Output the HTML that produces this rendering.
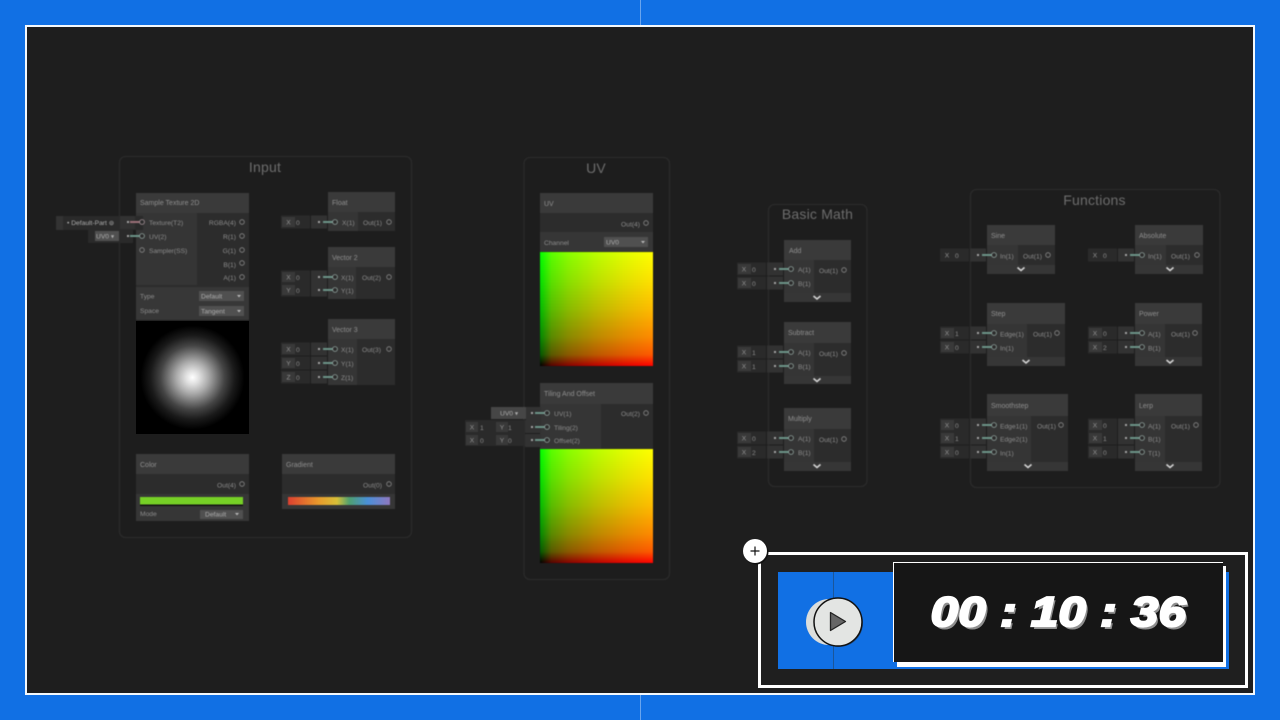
<!DOCTYPE html>
<html lang="en">
<head>
<meta charset="utf-8">
<title>Shader Graph Nodes</title>
<style>
html,body{margin:0;padding:0;width:1280px;height:720px;overflow:hidden;background:#1170e4}
*{box-sizing:border-box}
.a{position:absolute}
#frame{left:25px;top:25px;width:1230px;height:670px;background:#1e1e1e;border:2px solid #f4f8fb}
svg{position:absolute;left:0;top:0}
#g{filter:blur(.6px)}
#g text{font-family:"Liberation Sans",sans-serif;font-size:6.7px;fill:#8c8c8c}
#g text.h{font-size:7px;fill:#8f8f8f}
#g text.t{font-size:14px;fill:#6d6d6d;text-anchor:middle;letter-spacing:.2px}
#g text.k{text-anchor:middle;fill:#949494}
#g text.e{text-anchor:end}
#g text.w{fill:#adadad}
.uvp{background:linear-gradient(to right,#000 0,#590000 10%,#880000 25%,#bb0000 50%,#e10000 75%,#f00 100%),linear-gradient(to top,#000 0,#005900 10%,#008800 25%,#00bb00 50%,#00e100 75%,#0f0 100%);background-blend-mode:screen;filter:blur(.5px)}
#time{left:893px;top:562px;width:331px;height:100px;line-height:100px;text-align:center;font-family:"Liberation Sans",sans-serif;font-weight:700;font-style:italic;font-size:42px;color:#fff;-webkit-text-stroke:2.2px #fff;text-shadow:2px 3px 0 #8f8f8f;letter-spacing:.3px;white-space:pre;transform:scaleX(1.17)}
</style>
</head>
<body>
<div class="a" style="left:640px;top:0;width:1px;height:720px;background:#6aa5ee"></div>
<div class="a" id="frame"></div>

<svg id="g" width="1280" height="720" viewBox="0 0 1280 720">
<defs>
<g id="r">
<rect x="-54" y="-6.5" width="29" height="13" fill="#2a2a2a"/>
<rect x="-53" y="-5" width="13" height="10" fill="#393939"/>
<rect x="-24" y="-6.5" width="16" height="13" fill="#323232"/>
<rect x="-17" y="-1" width="2" height="2" fill="#a5a5a5"/>
<use href="#l"/>
</g>
<g id="l">
<rect x="-12" y="-1" width="10" height="2" fill="#6c9488"/>
<circle r="2.4" fill="#2c2c2c" stroke="#93a5a0" stroke-width=".8"/>
</g>
<circle id="p" r="2.3" fill="none" stroke="#8a8a8a" stroke-width=".8"/>
<path id="v" d="M-3.5-1.5 0 1.500 3.500-1.500" fill="none" stroke="#d5d5d5" stroke-width="1.600"/>
<path id="d" d="M-2-1H2L0 1.400Z" fill="#bbb"/>
</defs>

<!-- groups -->
<g fill="#1d1d1d" stroke="#2b2b2b" stroke-width="1.300">
<rect x="119.500" y="156.500" width="292" height="381" rx="6"/>
<rect x="524" y="157.500" width="145.500" height="422" rx="6"/>
<rect x="768.500" y="204.500" width="98.500" height="282" rx="6"/>
<rect x="970.500" y="189.500" width="249.500" height="298" rx="6"/>
</g>
<text class="t" x="265" y="172">Input</text>
<text class="t" x="596" y="173">UV</text>
<text class="t" x="817.500" y="219">Basic Math</text>
<text class="t" x="1094.500" y="205">Functions</text>

<!-- Sample Texture 2D -->
<rect x="136" y="193" width="113" height="127" fill="#2c2c2c"/>
<rect x="136" y="193" width="113" height="20" fill="#3a3a3a"/>
<rect x="136" y="213" width="61" height="72" fill="#353535"/>
<rect x="136" y="287" width="113" height="33" fill="#373737"/>
<text class="h" x="140" y="205">Sample Texture 2D</text>
<rect x="56" y="216" width="87" height="14" fill="#2a2a2a"/>
<rect x="56" y="216" width="7" height="14" fill="#333"/>
<text class="w" x="67" y="225">• Default-Part ⊚</text>
<rect x="120" y="216" width="15" height="13" fill="#323232"/>
<rect x="127" y="221" width="2" height="2" fill="#a5a5a5"/>
<rect x="130" y="221" width="10" height="2" fill="#9c7078"/>
<circle cx="142" cy="222" r="2.400" fill="#2c2c2c" stroke="#a8959a" stroke-width=".8"/>
<rect x="88" y="230" width="45" height="13" fill="#2a2a2a"/>
<rect x="95" y="231" width="24" height="10" fill="#505050"/>
<text class="w" x="96" y="238.500">UV0 ▾</text>
<use href="#l" x="142" y="236"/>
<rect x="127" y="235" width="2" height="2" fill="#a5a5a5"/>
<use href="#p" x="142" y="250"/>
<text x="149" y="225">Texture(T2)</text>
<text x="149" y="239">UV(2)</text>
<text x="149" y="253">Sampler(SS)</text>
<text class="e" x="236" y="225">RGBA(4)</text>
<text class="e" x="236" y="239">R(1)</text>
<text class="e" x="236" y="253">G(1)</text>
<text class="e" x="236" y="267">B(1)</text>
<text class="e" x="236" y="280">A(1)</text>
<use href="#p" x="242" y="222"/><use href="#p" x="242" y="236"/><use href="#p" x="242" y="250"/><use href="#p" x="242" y="263"/><use href="#p" x="242" y="277"/>
<text x="140" y="298.500">Type</text>
<text x="140" y="313">Space</text>
<rect x="199" y="291" width="45" height="10" fill="#505050"/>
<rect x="199" y="306" width="45" height="10" fill="#505050"/>
<text class="w" x="201" y="298.500">Default</text>
<text class="w" x="201" y="313.500">Tangent</text>
<use href="#d" x="239" y="296"/><use href="#d" x="239" y="311"/>

<!-- Float -->
<rect x="328" y="192" width="67" height="39" fill="#2c2c2c"/>
<rect x="328" y="192" width="67" height="20" fill="#3a3a3a"/>
<rect x="328" y="212" width="30" height="19" fill="#353535"/>
<text class="h" x="332" y="205">Float</text>
<use href="#r" x="335" y="222"/>
<text class="k" x="288.500" y="224.500">X</text><text x="296" y="225">0</text>
<text x="342" y="225">X(1)</text><text x="363" y="225">Out(1)</text><use href="#p" x="389" y="222"/>

<!-- Vector 2 -->
<rect x="328" y="247" width="67" height="52" fill="#2c2c2c"/>
<rect x="328" y="247" width="67" height="20" fill="#3a3a3a"/>
<rect x="328" y="267" width="28" height="32" fill="#353535"/>
<text class="h" x="332" y="260">Vector 2</text>
<use href="#r" x="335" y="277"/><use href="#r" x="335" y="290"/>
<text class="k" x="288.500" y="279.500">X</text><text x="296" y="280">0</text>
<text class="k" x="288.500" y="292.500">Y</text><text x="296" y="293">0</text>
<text x="341" y="280">X(1)</text><text x="341" y="293">Y(1)</text><text x="362" y="280">Out(2)</text><use href="#p" x="389" y="277"/>

<!-- Vector 3 -->
<rect x="328" y="319" width="67" height="66" fill="#2c2c2c"/>
<rect x="328" y="319" width="67" height="20" fill="#3a3a3a"/>
<rect x="328" y="339" width="29" height="46" fill="#353535"/>
<text class="h" x="332" y="332">Vector 3</text>
<use href="#r" x="335" y="349"/><use href="#r" x="335" y="363"/><use href="#r" x="335" y="377"/>
<text class="k" x="288.500" y="351.500">X</text><text x="296" y="352">0</text>
<text class="k" x="288.500" y="365.500">Y</text><text x="296" y="366">0</text>
<text class="k" x="288.500" y="379.500">Z</text><text x="296" y="380">0</text>
<text x="341" y="352">X(1)</text><text x="341" y="366">Y(1)</text><text x="341" y="380">Z(1)</text><text x="362" y="352">Out(3)</text><use href="#p" x="389" y="349"/>

<!-- Color -->
<rect x="136" y="454" width="113" height="67" fill="#2c2c2c"/>
<rect x="136" y="454" width="113" height="20" fill="#3a3a3a"/>
<rect x="136" y="494" width="113" height="27" fill="#363636"/>
<text class="h" x="140" y="467">Color</text>
<text class="e" x="236" y="487.500">Out(4)</text><use href="#p" x="242" y="484"/>
<rect x="140" y="497" width="103" height="9" fill="#111"/>
<rect x="140" y="497" width="103" height="7.500" fill="#76d026"/>
<text x="140" y="516">Mode</text>
<rect x="200" y="510" width="43" height="9" fill="#505050"/>
<text class="w" x="205" y="516.500">Default</text><use href="#d" x="237" y="514"/>

<!-- Gradient -->
<defs><linearGradient id="gr"><stop offset="0" stop-color="#dc4030"/><stop offset=".3" stop-color="#e89a2c"/><stop offset=".48" stop-color="#d8c038"/><stop offset=".6" stop-color="#4fa070"/><stop offset=".78" stop-color="#4a90d8"/><stop offset="1" stop-color="#8f78c0"/></linearGradient></defs>
<rect x="282" y="454" width="113" height="55" fill="#2c2c2c"/>
<rect x="282" y="454" width="113" height="20" fill="#3a3a3a"/>
<rect x="282" y="494" width="113" height="15" fill="#363636"/>
<text class="h" x="286" y="467">Gradient</text>
<text class="e" x="382" y="487.500">Out(0)</text><use href="#p" x="389" y="484"/>
<rect x="288" y="497" width="102" height="8" fill="url(#gr)"/>

<!-- UV -->
<rect x="540" y="193" width="113" height="59" fill="#2c2c2c"/>
<rect x="540" y="193" width="113" height="20" fill="#3a3a3a"/>
<rect x="540" y="232" width="113" height="20" fill="#363636"/>
<text class="h" x="544" y="206">UV</text>
<text class="e" x="640" y="226.500">Out(4)</text><use href="#p" x="646" y="223"/>
<text x="544" y="245">Channel</text>
<rect x="604" y="237" width="44" height="10" fill="#505050"/>
<text class="w" x="606" y="244.500">UV0</text><use href="#d" x="643" y="242"/>

<!-- Tiling and Offset -->
<rect x="540" y="383" width="113" height="66" fill="#2c2c2c"/>
<rect x="540" y="383" width="113" height="21" fill="#3a3a3a"/>
<rect x="540" y="404" width="61" height="45" fill="#353535"/>
<text class="h" x="544" y="396">Tiling And Offset</text>
<rect x="491" y="407" width="35" height="12" fill="#505050" fill-opacity=".8"/>
<text class="w" x="500" y="415.500">UV0 ▾</text>
<rect x="526" y="407" width="15" height="13" fill="#323232"/><rect x="531" y="412" width="2" height="2" fill="#a5a5a5"/>
<use href="#l" x="547" y="413"/>
<g fill="#2a2a2a"><rect x="465" y="420" width="60" height="13"/><rect x="465" y="433" width="60" height="13"/></g>
<g fill="#393939"><rect x="466" y="422" width="12" height="10"/><rect x="466" y="435" width="12" height="10"/><rect x="496" y="422" width="12" height="10"/><rect x="496" y="435" width="12" height="10"/></g>
<rect x="525" y="420" width="16" height="13" fill="#323232"/><rect x="525" y="434" width="16" height="13" fill="#323232"/>
<rect x="531" y="426" width="2" height="2" fill="#a5a5a5"/><rect x="531" y="439" width="2" height="2" fill="#a5a5a5"/>
<use href="#l" x="547" y="427"/><use href="#l" x="547" y="440"/>
<text class="k" x="472" y="429.500">X</text><text x="480" y="430">1</text><text class="k" x="502" y="429.500">Y</text><text x="508" y="430">1</text>
<text class="k" x="472" y="442.500">X</text><text x="480" y="443">0</text><text class="k" x="502" y="442.500">Y</text><text x="508" y="443">0</text>
<text x="554" y="416">UV(1)</text><text x="554" y="430">Tiling(2)</text><text x="554" y="443">Offset(2)</text>
<text class="e" x="640" y="416">Out(2)</text><use href="#p" x="646" y="413"/>

<!-- Add -->
<rect x="784" y="240" width="67" height="62" fill="#2c2c2c"/>
<rect x="784" y="240" width="67" height="20" fill="#3a3a3a"/>
<rect x="784" y="260" width="30" height="33" fill="#353535"/>
<rect x="784" y="293" width="67" height="9" fill="#363636"/>
<text class="h" x="789" y="253">Add</text>
<use href="#r" x="791" y="269"/><use href="#r" x="791" y="283"/>
<text class="k" x="744" y="271.500">X</text><text x="752" y="272">0</text>
<text class="k" x="744" y="285.500">X</text><text x="752" y="286">0</text>
<text x="798" y="272">A(1)</text><text x="798" y="286">B(1)</text><text x="819" y="273">Out(1)</text><use href="#p" x="844" y="270"/>
<use href="#v" x="817" y="297.500"/>

<!-- Subtract -->
<rect x="784" y="322" width="67" height="62" fill="#2c2c2c"/>
<rect x="784" y="322" width="67" height="21" fill="#3a3a3a"/>
<rect x="784" y="343" width="30" height="33" fill="#353535"/>
<rect x="784" y="376" width="67" height="8" fill="#363636"/>
<text class="h" x="788" y="335">Subtract</text>
<use href="#r" x="791" y="352"/><use href="#r" x="791" y="366"/>
<text class="k" x="744" y="354.500">X</text><text x="752" y="355">1</text>
<text class="k" x="744" y="368.500">X</text><text x="752" y="369">1</text>
<text x="798" y="355">A(1)</text><text x="798" y="369">B(1)</text><text x="819" y="356">Out(1)</text><use href="#p" x="844" y="353"/>
<use href="#v" x="817" y="380"/>

<!-- Multiply -->
<rect x="784" y="408" width="67" height="63" fill="#2c2c2c"/>
<rect x="784" y="408" width="67" height="21" fill="#3a3a3a"/>
<rect x="784" y="429" width="30" height="33" fill="#353535"/>
<rect x="784" y="462" width="67" height="9" fill="#363636"/>
<text class="h" x="788" y="421">Multiply</text>
<use href="#r" x="791" y="438"/><use href="#r" x="791" y="452"/>
<text class="k" x="744" y="440.500">X</text><text x="752" y="441">0</text>
<text class="k" x="744" y="454.500">X</text><text x="752" y="455">2</text>
<text x="798" y="441">A(1)</text><text x="798" y="455">B(1)</text><text x="819" y="442">Out(1)</text><use href="#p" x="844" y="439"/>
<use href="#v" x="817" y="466"/>

<!-- Sine -->
<rect x="987" y="225" width="68" height="49" fill="#2c2c2c"/>
<rect x="987" y="225" width="68" height="20" fill="#3a3a3a"/>
<rect x="987" y="245" width="31" height="20" fill="#353535"/>
<rect x="987" y="265" width="68" height="9" fill="#363636"/>
<text class="h" x="991" y="238">Sine</text>
<use href="#r" x="994" y="255"/>
<rect x="940" y="248.500" width="29" height="13" fill="#2a2a2a"/>
<text class="k" x="947" y="257.500">X</text><text x="955" y="258">0</text>
<text x="1000" y="258.500">In(1)</text><text x="1023" y="258.500">Out(1)</text><use href="#p" x="1048" y="255"/>
<use href="#v" x="1021" y="269"/>

<!-- Absolute -->
<rect x="1135" y="225" width="68" height="49" fill="#2c2c2c"/>
<rect x="1135" y="225" width="68" height="20" fill="#3a3a3a"/>
<rect x="1135" y="245" width="31" height="20" fill="#353535"/>
<rect x="1135" y="265" width="68" height="9" fill="#363636"/>
<text class="h" x="1139" y="238">Absolute</text>
<use href="#r" x="1142" y="255"/>
<rect x="1088" y="248.500" width="29" height="13" fill="#2a2a2a"/>
<text class="k" x="1095" y="257.500">X</text><text x="1103" y="258">0</text>
<text x="1148" y="258.500">In(1)</text><text x="1171" y="258.500">Out(1)</text><use href="#p" x="1197" y="255"/>
<use href="#v" x="1170" y="269"/>

<!-- Step -->
<rect x="987" y="303" width="78" height="63" fill="#2c2c2c"/>
<rect x="987" y="303" width="78" height="21" fill="#3a3a3a"/>
<rect x="987" y="324" width="40" height="33" fill="#353535"/>
<rect x="987" y="357" width="78" height="9" fill="#363636"/>
<text class="h" x="991" y="316">Step</text>
<use href="#r" x="994" y="333"/><use href="#r" x="994" y="347"/>
<text class="k" x="947" y="335.500">X</text><text x="955" y="336">1</text>
<text class="k" x="947" y="349.500">X</text><text x="955" y="350">0</text>
<text x="1000" y="336.500">Edge(1)</text><text x="1000" y="350.500">In(1)</text><text x="1033" y="336.500">Out(1)</text><use href="#p" x="1057" y="333"/>
<use href="#v" x="1026" y="361.500"/>

<!-- Power -->
<rect x="1135" y="303" width="67" height="63" fill="#2c2c2c"/>
<rect x="1135" y="303" width="67" height="21" fill="#3a3a3a"/>
<rect x="1135" y="324" width="30" height="33" fill="#353535"/>
<rect x="1135" y="357" width="67" height="9" fill="#363636"/>
<text class="h" x="1139" y="316">Power</text>
<use href="#r" x="1142" y="333"/><use href="#r" x="1142" y="347"/>
<text class="k" x="1095" y="335.500">X</text><text x="1103" y="336">0</text>
<text class="k" x="1095" y="349.500">X</text><text x="1103" y="350">2</text>
<text x="1148" y="336.500">A(1)</text><text x="1148" y="350.500">B(1)</text><text x="1171" y="336.500">Out(1)</text><use href="#p" x="1195" y="333"/>
<use href="#v" x="1170" y="361.500"/>

<!-- Smoothstep -->
<rect x="987" y="394" width="81" height="77" fill="#2c2c2c"/>
<rect x="987" y="394" width="81" height="22" fill="#3a3a3a"/>
<rect x="987" y="416" width="44" height="46" fill="#353535"/>
<rect x="987" y="462" width="81" height="9" fill="#363636"/>
<text class="h" x="991" y="408">Smoothstep</text>
<use href="#r" x="994" y="425"/><use href="#r" x="994" y="438"/><use href="#r" x="994" y="452"/>
<text class="k" x="947" y="427.500">X</text><text x="955" y="428">0</text>
<text class="k" x="947" y="440.500">X</text><text x="955" y="441">1</text>
<text class="k" x="947" y="454.500">X</text><text x="955" y="455">0</text>
<text x="1000" y="428.500">Edge1(1)</text><text x="1000" y="441.500">Edge2(1)</text><text x="1000" y="455.500">In(1)</text><text x="1037" y="428.500">Out(1)</text><use href="#p" x="1061" y="425"/>
<use href="#v" x="1028" y="466"/>

<!-- Lerp -->
<rect x="1135" y="394" width="67" height="77" fill="#2c2c2c"/>
<rect x="1135" y="394" width="67" height="22" fill="#3a3a3a"/>
<rect x="1135" y="416" width="30" height="46" fill="#353535"/>
<rect x="1135" y="462" width="67" height="9" fill="#363636"/>
<text class="h" x="1139" y="408">Lerp</text>
<use href="#r" x="1142" y="425"/><use href="#r" x="1142" y="438"/><use href="#r" x="1142" y="452"/>
<text class="k" x="1095" y="427.500">X</text><text x="1103" y="428">0</text>
<text class="k" x="1095" y="440.500">X</text><text x="1103" y="441">1</text>
<text class="k" x="1095" y="454.500">X</text><text x="1103" y="455">0</text>
<text x="1148" y="428.500">A(1)</text><text x="1148" y="441.500">B(1)</text><text x="1148" y="455.500">T(1)</text><text x="1171" y="428.500">Out(1)</text><use href="#p" x="1196" y="425"/>
<use href="#v" x="1170" y="466"/>
</svg>

<!-- previews -->
<div class="a" style="left:136px;top:321px;width:113px;height:113px;background:radial-gradient(circle at 50% 50%,#fff 0,#dedede 7px,#ababab 16px,#777 24px,#444 32px,#1a1a1a 42px,#000 52px)"></div>
<div class="a uvp" style="left:540px;top:252px;width:113px;height:114px"></div>
<div class="a uvp" style="left:540px;top:449px;width:113px;height:114px"></div>

<!-- timer widget -->
<div class="a" style="left:758px;top:552px;width:490px;height:136px;border:3px solid #fff;background:#1f1f1f"></div>
<div class="a" style="left:778px;top:572px;width:451px;height:97px;background:#1170e4"></div>
<div class="a" style="left:833px;top:572px;width:1px;height:97px;background:#1b5699"></div>
<div class="a" style="left:897px;top:566px;width:329px;height:101px;background:#fff"></div>
<div class="a" style="left:893px;top:562px;width:330px;height:100px;background:#161616;border-top:1px solid #fff;border-left:1px solid #fff"></div>
<div class="a" id="time">00 : 10 : 36</div>

<svg width="1280" height="720" viewBox="0 0 1280 720">
<circle cx="829" cy="622" r="23" fill="#dcdedc"/>
<circle cx="839" cy="623" r="24" fill="#1b4c86"/>
<circle cx="838" cy="622" r="24" fill="#e3e5e3" stroke="#111" stroke-width="1.500"/>
<path d="M830.500 612.500L845.500 621.500L830.500 630.500Z" fill="#666" stroke="#222" stroke-width="1.300" stroke-linejoin="round"/>
<circle cx="756" cy="552" r="12.500" fill="#111"/>
<circle cx="755" cy="551" r="12" fill="#fff"/>
<path d="M755 546.500V555.500M750.500 551H759.500" stroke="#111" stroke-width="1.200"/>
</svg>
</body>
</html>
